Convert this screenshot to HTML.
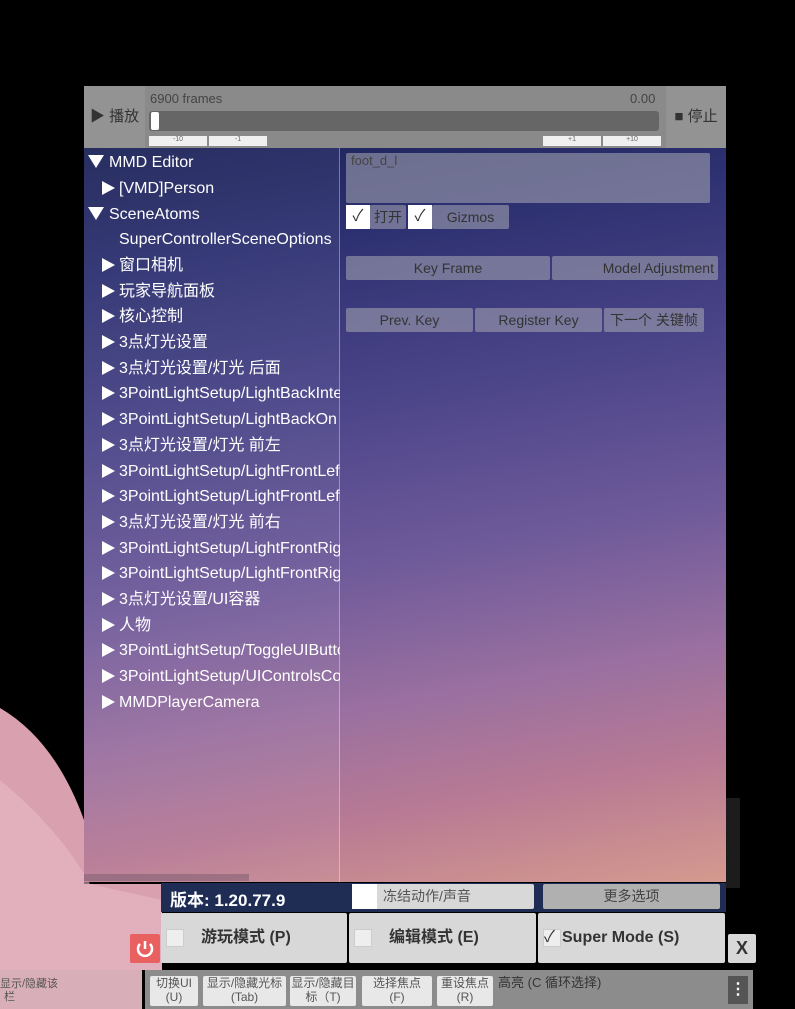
<!DOCTYPE html><html><head><meta charset="utf-8"><style>
*{margin:0;padding:0;box-sizing:border-box}
body{width:795px;height:1009px;background:#000;position:relative;overflow:hidden;font-family:"Liberation Sans","Noto Sans CJK SC",sans-serif}
.a{position:absolute}
.panel{left:84px;top:148px;width:642px;height:734px;background:linear-gradient(170deg,#1c2358 0%,#2c3070 15%,#4a4488 35%,#6e5a9a 55%,#9a70a0 72%,#b87a94 85%,#d49a8e 100%)}
.left{left:84px;top:148px;width:256px;height:734px;background:rgba(255,255,255,0.05);border-right:1px solid rgba(255,255,255,0.35)}
.tr{position:absolute;color:#fff;font-size:16px;white-space:nowrap;overflow:hidden;width:256px;left:0;height:22px;line-height:22px}
.tr i{display:inline-block;width:0;height:0;border-top:7px solid transparent;border-bottom:7px solid transparent;border-left:13px solid #fff;margin-right:4px;vertical-align:-2px}
.tr b{display:inline-block;width:0;height:0;border-left:8px solid transparent;border-right:8px solid transparent;border-top:13px solid #fff;margin-right:5px;vertical-align:-1px}
.btn{position:absolute;background:rgba(160,160,175,0.6);color:#333;font-size:14px;text-align:center;border-radius:2px}
.gb{position:absolute;background:#d8d8d8;color:#222;border-radius:2px}
.tb{position:absolute;background:#e8e8e8;color:#555;font-size:12px;text-align:center;line-height:14px;top:976px;height:30px;border-radius:2px}
</style></head><body>
<svg class="a" style="left:0;top:0" width="795" height="1009"><path d="M0 708 Q55 740 84 820 L84 884 L162 884 L162 970 L0 970 Z" fill="#d9a0b0"/><path d="M0 780 Q60 830 90 884 L162 900 L162 970 L0 970Z" fill="#e8bac6" opacity=".6"/></svg>
<div class="a" style="left:726px;top:798px;width:14px;height:90px;background:#1c1c1c"></div>
<div class="a" style="left:84px;top:86px;width:642px;height:62px;background:#8a8a8a"></div>
<div class="a" style="left:84px;top:86px;width:61px;height:62px;background:#939393;color:#333;font-size:15px;line-height:62px;text-align:center">▶ 播放</div>
<div class="a" style="left:666px;top:86px;width:60px;height:62px;background:#939393;color:#333;font-size:15px;line-height:62px;text-align:center">■ 停止</div>
<div class="a" style="left:150px;top:91px;color:#444;font-size:13px">6900 frames</div>
<div class="a" style="left:630px;top:91px;color:#444;font-size:13px">0.00</div>
<div class="a" style="left:149px;top:111px;width:510px;height:20px;background:#666;border-radius:3px"></div>
<div class="a" style="left:151px;top:112px;width:8px;height:18px;background:#fff;border-radius:2px"></div>
<div class="a" style="left:149px;top:136px;width:58px;height:10px;background:#f0f0f0;font-size:7px;text-align:center;color:#666">-10</div>
<div class="a" style="left:209px;top:136px;width:58px;height:10px;background:#f0f0f0;font-size:7px;text-align:center;color:#666">-1</div>
<div class="a" style="left:543px;top:136px;width:58px;height:10px;background:#f0f0f0;font-size:7px;text-align:center;color:#666">+1</div>
<div class="a" style="left:603px;top:136px;width:58px;height:10px;background:#f0f0f0;font-size:7px;text-align:center;color:#666">+10</div>
<div class="a panel"></div>
<div class="a left">
<div class="tr" style="top:4px;left:4px"><b></b>MMD Editor</div>
<div class="tr" style="top:30px;left:18px"><i></i>[VMD]Person</div>
<div class="tr" style="top:56px;left:4px"><b></b>SceneAtoms</div>
<div class="tr" style="top:81px;left:35px;width:221px">SuperControllerSceneOptions</div>
<div class="tr" style="top:107px;left:18px"><i></i>窗口相机</div>
<div class="tr" style="top:133px;left:18px"><i></i>玩家导航面板</div>
<div class="tr" style="top:158px;left:18px"><i></i>核心控制</div>
<div class="tr" style="top:184px;left:18px"><i></i>3点灯光设置</div>
<div class="tr" style="top:210px;left:18px"><i></i>3点灯光设置/灯光 后面</div>
<div class="tr" style="top:235px;left:18px;width:238px"><i></i>3PointLightSetup/LightBackIntensity</div>
<div class="tr" style="top:261px;left:18px;width:238px"><i></i>3PointLightSetup/LightBackOn</div>
<div class="tr" style="top:287px;left:18px"><i></i>3点灯光设置/灯光 前左</div>
<div class="tr" style="top:313px;left:18px;width:238px"><i></i>3PointLightSetup/LightFrontLeft</div>
<div class="tr" style="top:338px;left:18px;width:238px"><i></i>3PointLightSetup/LightFrontLeft</div>
<div class="tr" style="top:364px;left:18px"><i></i>3点灯光设置/灯光 前右</div>
<div class="tr" style="top:390px;left:18px;width:238px"><i></i>3PointLightSetup/LightFrontRight</div>
<div class="tr" style="top:415px;left:18px;width:238px"><i></i>3PointLightSetup/LightFrontRight</div>
<div class="tr" style="top:441px;left:18px"><i></i>3点灯光设置/UI容器</div>
<div class="tr" style="top:467px;left:18px"><i></i>人物</div>
<div class="tr" style="top:492px;left:18px;width:238px"><i></i>3PointLightSetup/ToggleUIButton</div>
<div class="tr" style="top:518px;left:18px;width:238px"><i></i>3PointLightSetup/UIControlsContainer</div>
<div class="tr" style="top:544px;left:18px"><i></i>MMDPlayerCamera</div>
<div class="a" style="left:0;top:726px;width:165px;height:7px;background:rgba(120,90,110,0.5)"></div>
</div>
<div class="btn" style="left:346px;top:153px;width:364px;height:50px;text-align:left;padding:0 5px;font-size:13px;color:#444">foot_d_l</div>
<div class="a" style="left:346px;top:205px;width:24px;height:24px;background:#fff;color:#333;text-align:center;line-height:24px">✓</div>
<div class="btn" style="left:370px;top:205px;width:36px;height:24px;line-height:24px">打开</div>
<div class="a" style="left:408px;top:205px;width:24px;height:24px;background:#fff;color:#333;text-align:center;line-height:24px">✓</div>
<div class="btn" style="left:432px;top:205px;width:77px;height:24px;line-height:24px">Gizmos</div>
<div class="btn" style="left:346px;top:256px;width:204px;height:24px;line-height:24px">Key Frame</div>
<div class="btn" style="left:552px;top:256px;width:166px;height:24px;line-height:24px;text-align:right;padding-right:4px">Model Adjustment</div>
<div class="btn" style="left:346px;top:308px;width:127px;height:24px;line-height:24px">Prev. Key</div>
<div class="btn" style="left:475px;top:308px;width:127px;height:24px;line-height:24px">Register Key</div>
<div class="btn" style="left:604px;top:308px;width:100px;height:24px;line-height:24px">下一个 关键帧</div>
<div class="a" style="left:161px;top:883px;width:565px;height:29px;background:#1f2d55"></div>
<div class="a" style="left:170px;top:886px;color:#fff;font-weight:bold;font-size:17px">版本: 1.20.77.9</div>
<div class="gb" style="left:352px;top:884px;width:182px;height:25px;font-size:14px;line-height:25px;padding-left:31px;color:#555">冻结动作/声音</div>
<div class="a" style="left:352px;top:884px;width:25px;height:25px;background:#fff"></div>
<div class="gb" style="left:543px;top:884px;width:177px;height:25px;font-size:14px;line-height:25px;text-align:center;background:#b0b0b0;color:#444">更多选项</div>
<div class="gb" style="left:161px;top:913px;width:186px;height:50px;font-size:16px;font-weight:bold;line-height:50px;padding-left:40px;color:#333">游玩模式 (P)</div>
<div class="gb" style="left:349px;top:913px;width:187px;height:50px;font-size:16px;font-weight:bold;line-height:50px;padding-left:40px;color:#333">编辑模式 (E)</div>
<div class="gb" style="left:538px;top:913px;width:187px;height:50px;font-size:16px;font-weight:bold;line-height:50px;padding-left:24px;color:#333">Super Mode (S)</div>
<div class="a" style="left:166px;top:929px;width:18px;height:18px;background:#eee;border:1px solid #ccc"></div>
<div class="a" style="left:354px;top:929px;width:18px;height:18px;background:#eee;border:1px solid #ccc"></div>
<div class="a" style="left:543px;top:929px;width:18px;height:18px;background:#eee;border:1px solid #ccc;font-size:16px;line-height:16px;color:#333">✓</div>
<div class="a" style="left:130px;top:934px;width:30px;height:29px;background:#e86060;border-radius:2px"><svg width="30" height="29"><path d="M10 10 A7 7 0 1 0 20 10" stroke="#fff" stroke-width="2.5" fill="none"/><path d="M15 7 V15" stroke="#fff" stroke-width="2.5"/></svg></div>
<div class="gb" style="left:728px;top:934px;width:28px;height:29px;font-size:18px;font-weight:bold;line-height:29px;text-align:center;color:#333">X</div>
<div class="a" style="left:0;top:970px;width:142px;height:39px;background:#d8aeb8;overflow:hidden"><div class="a" style="left:-11px;top:8px;color:#555;font-size:11px;line-height:13px;white-space:nowrap">键显示/隐藏该<br><span style="padding-left:15px">栏</span></div></div>
<div class="a" style="left:145px;top:970px;width:608px;height:39px;background:#8c8c8c"></div>
<div class="tb" style="left:150px;width:48px">切换UI<br>(U)</div>
<div class="tb" style="left:203px;width:83px">显示/隐藏光标<br>(Tab)</div>
<div class="tb" style="left:290px;width:66px">显示/隐藏目<br>标（T)</div>
<div class="tb" style="left:362px;width:70px">选择焦点<br>(F)</div>
<div class="tb" style="left:437px;width:56px">重设焦点<br>(R)</div>
<div class="a" style="left:498px;top:972px;color:#333;font-size:13px">高亮 (C 循环选择)</div>
<div class="a" style="left:728px;top:976px;width:20px;height:28px;background:#555;color:#fff;text-align:center;line-height:28px;font-weight:bold">⋮</div>
</body></html>
